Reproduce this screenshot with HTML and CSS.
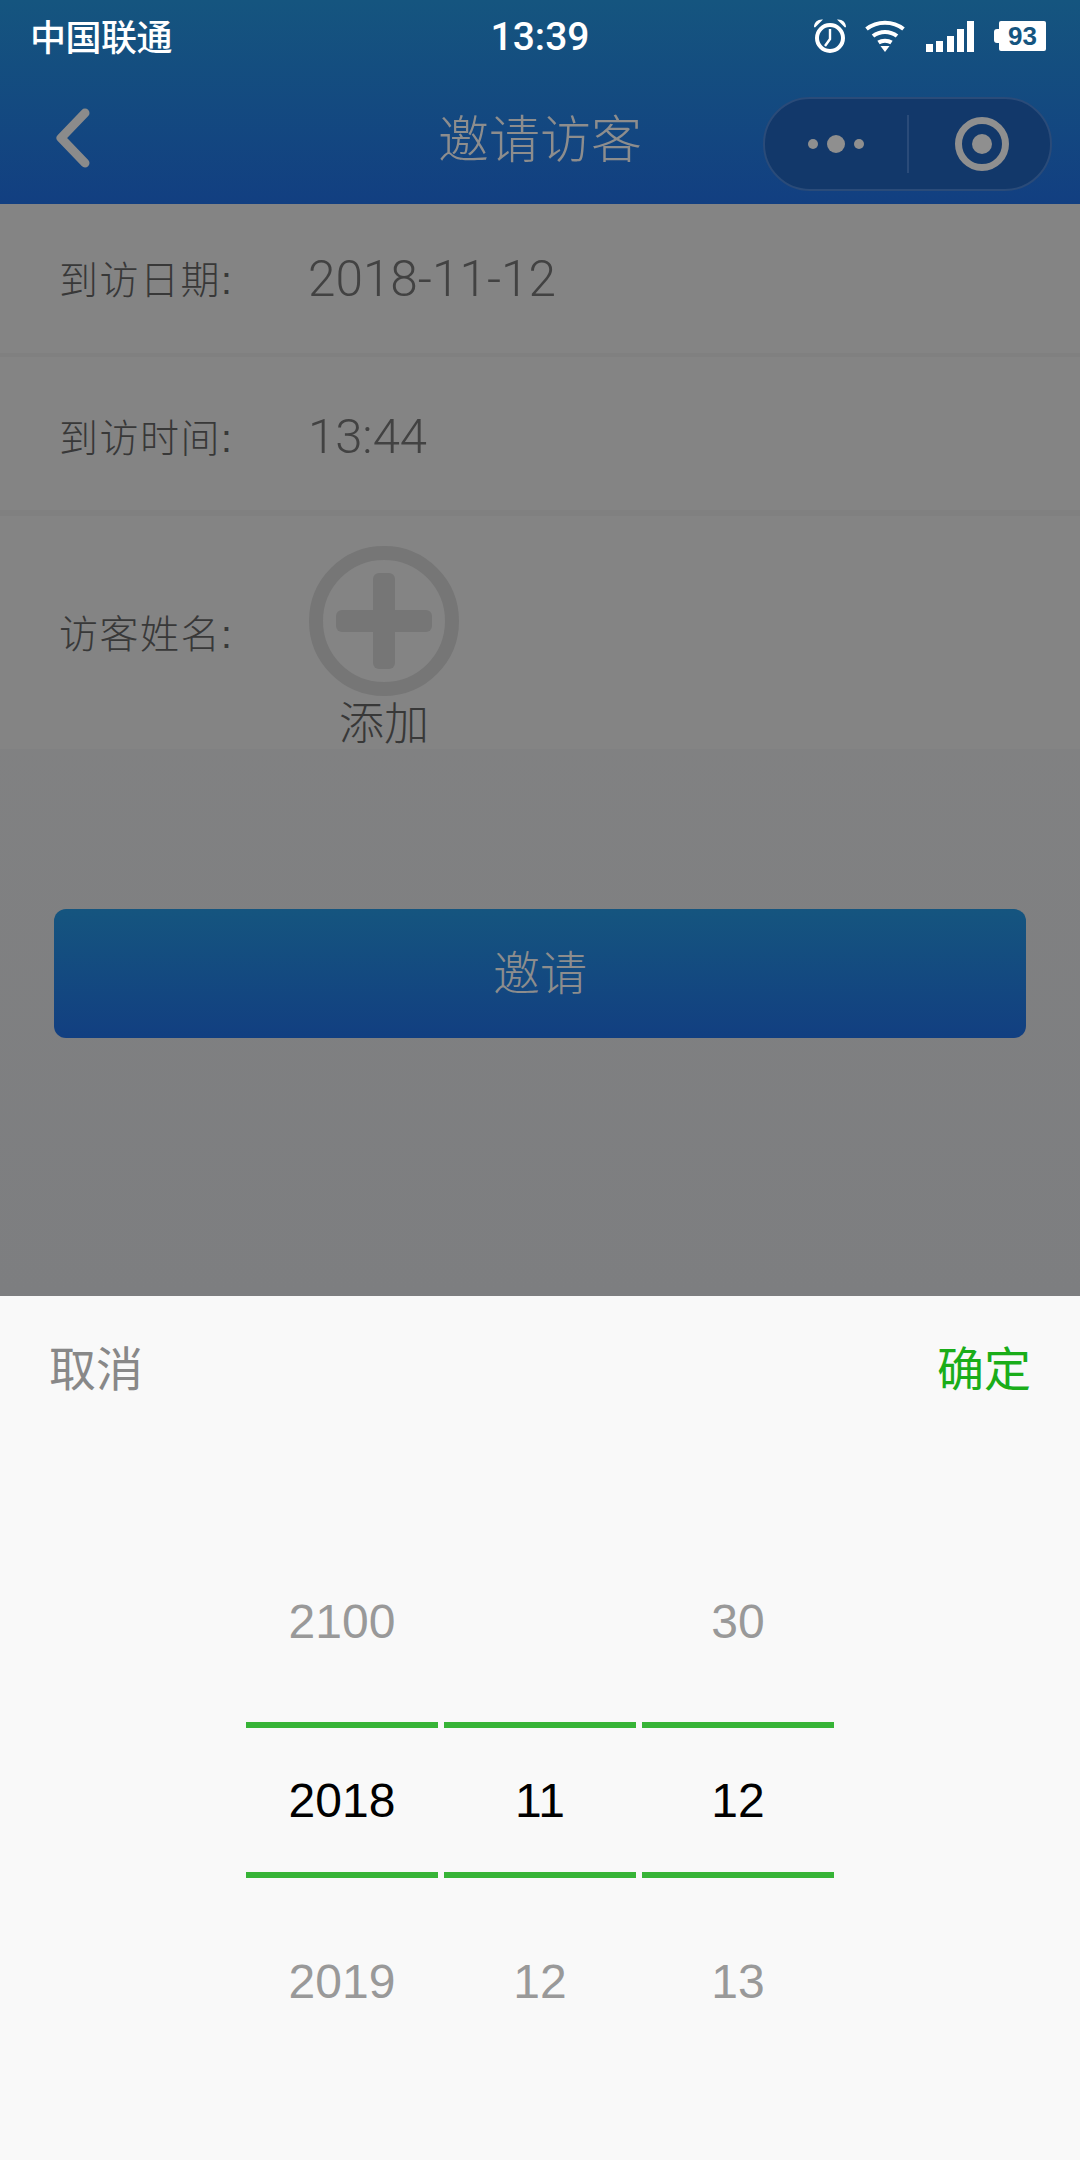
FILE: index.html
```html
<!DOCTYPE html>
<html lang="zh-CN">
<head>
    <meta charset="UTF-8">
    <meta name="viewport" content="width=device-width, initial-scale=1.0">
    <title>邀请访客</title>
    <link rel="stylesheet" href="styles.css">
</head>
<body>
    <div class="app">
        <header class="top">
            <div class="status-bar">
                <span class="carrier">中国联通</span>
                <span class="clock">13:39</span>
                <div class="status-icons">
                    <svg class="icon-alarm" width="34" height="34" viewBox="0 0 34 34">
                        <circle cx="17" cy="19" r="13" fill="none" stroke="#fff" stroke-width="4"/>
                        <path d="M17 10v10l-5 7" fill="none" stroke="#fff" stroke-width="2.4"/>
                        <path d="M1 8C1 3 5 0 10 0.500L2 8.500ZM33 8C33 3 29 0 24 0.500L32 8.500Z" fill="#fff"/>
                    </svg>
                    <svg class="icon-wifi" width="40" height="32" viewBox="0 0 40 32">
                        <path d="M1.500 9C12 0.500 28 0.500 38.500 9M8 16C15 10.500 25 10.500 32 16M13.500 22.500C17 20 23 20 26.500 22.500" fill="none" stroke="#fff" stroke-width="4"/>
                        <path d="M15.500 26H24.500L20 32Z" fill="#fff"/>
                    </svg>
                    <div class="signal">
                        <i class="bar-1"></i><i class="bar-2"></i><i class="bar-3"></i><i class="bar-4"></i><i class="bar-5"></i>
                    </div>
                    <div class="battery"><span>93</span></div>
                </div>
            </div>
            <nav class="nav-bar">
                <svg class="back" width="40" height="64" viewBox="0 0 40 64">
                    <path d="M30 7L6 32L30 57" fill="none" stroke="#8b8b8b" stroke-width="9" stroke-linecap="round" stroke-linejoin="round"/>
                </svg>
                <h1 class="title">邀请访客</h1>
                <div class="capsule">
                    <div class="capsule-more"><i class="dot"></i><i class="dot dot-big"></i><i class="dot"></i></div>
                    <div class="capsule-close"><i class="ring"></i></div>
                </div>
            </nav>
        </header>

        <main class="page">
            <div class="form">
                <div class="row row-date">
                    <span class="label">到访日期:</span>
                    <span class="value">2018-11-12</span>
                </div>
                <div class="row row-time">
                    <span class="label">到访时间:</span>
                    <span class="value">13:44</span>
                </div>
                <div class="row row-name">
                    <span class="label">访客姓名:</span>
                    <div class="add">
                        <div class="add-circle"></div>
                        <span class="add-text">添加</span>
                    </div>
                </div>
            </div>
            <button class="invite">邀请</button>
        </main>

        <section class="picker">
            <div class="picker-head">
                <span class="cancel">取消</span>
                <span class="confirm">确定</span>
            </div>
            <div class="picker-body">
                <div class="column">
                    <div class="item">2100</div>
                    <div class="item selected">2018</div>
                    <div class="item">2019</div>
                </div>
                <div class="column">
                    <div class="item"></div>
                    <div class="item selected">11</div>
                    <div class="item">12</div>
                </div>
                <div class="column">
                    <div class="item">30</div>
                    <div class="item selected">12</div>
                    <div class="item">13</div>
                </div>
            </div>
        </section>
    </div>
</body>
</html>
```

FILE: styles.css
```css
* {
    margin: 0;
    padding: 0;
    box-sizing: border-box;
}

body {
    width: 1080px;
    height: 2160px;
    overflow: hidden;
    background-color: #f9f9f9;
    font-family: "Liberation Sans", "Noto Sans CJK SC", sans-serif;
}

.app {
    display: flex;
    flex-direction: column;
    height: 2160px;
}

/* header */
.top {
    height: 204px;
    background: linear-gradient(180deg, #15557f, #123f81);
}

.status-bar {
    display: grid;
    grid-template-columns: 1fr auto 1fr;
    align-items: center;
    height: 72px;
    padding: 0 34px;
    color: #fff;
}

.carrier {
    margin: -2px 0 0 -4px;
    font-size: 36px;
    font-weight: 500;
    letter-spacing: -0.5px;
}

.clock {
    padding-top: 2px;
    font-family: Roboto, "Liberation Sans", sans-serif;
    font-size: 39px;
    font-weight: 500;
}

.status-icons {
    display: flex;
    align-items: center;
    justify-content: flex-end;
}

.icon-alarm {
    margin-right: 18px;
}

.icon-wifi {
    margin-right: 21px;
}

.signal {
    display: flex;
    align-items: flex-end;
    gap: 3.25px;
    height: 32px;
    margin-right: 25px;
}

.signal i {
    display: block;
    width: 7px;
    background-color: #fff;
}

.signal .bar-1 {
    height: 8px;
}

.signal .bar-2 {
    height: 11px;
}

.signal .bar-3 {
    height: 16px;
}

.signal .bar-4 {
    height: 23px;
}

.signal .bar-5 {
    height: 31px;
}

.battery {
    position: relative;
    display: flex;
    align-items: center;
    justify-content: center;
    width: 47px;
    height: 30px;
    border-radius: 2px;
    background-color: #fff;
}

.battery::before {
    content: "";
    position: absolute;
    left: -5px;
    top: 8px;
    width: 5px;
    height: 14px;
    border-radius: 3px 0 0 3px;
    background-color: #fff;
}

.battery span {
    color: #15557f;
    font-size: 26px;
    font-weight: 700;
}

.nav-bar {
    display: grid;
    grid-template-columns: 1fr auto 1fr;
    align-items: center;
    height: 132px;
    padding: 0 28px;
}

.back {
    margin-left: 27px;
}

.title {
    padding-bottom: 5px;
    color: #8d8d8d;
    font-size: 51px;
    font-weight: 300;
    font-family: "Noto Sans CJK SC", sans-serif;
}

.capsule {
    justify-self: end;
    display: flex;
    align-items: center;
    width: 289px;
    height: 94px;
    margin-top: 12px;
    border: 2px solid #2a4b79;
    border-radius: 47px;
    background-color: #12386a;
}

.capsule-more {
    display: flex;
    align-items: center;
    justify-content: center;
    gap: 9px;
    width: 144px;
    height: 58px;
    border-right: 2px solid #2a4b79;
}

.dot {
    display: block;
    width: 10px;
    height: 10px;
    border-radius: 50%;
    background-color: #8f8f8f;
}

.dot-big {
    width: 18px;
    height: 18px;
}

.capsule-close {
    display: flex;
    flex: 1;
    justify-content: center;
    padding-left: 5px;
}

.ring {
    display: flex;
    align-items: center;
    justify-content: center;
    width: 54px;
    height: 54px;
    border: 7px solid #8f8f8f;
    border-radius: 50%;
}

.ring::after {
    content: "";
    width: 20px;
    height: 20px;
    border-radius: 50%;
    background-color: #8f8f8f;
}

/* form behind the mask */
.page {
    height: 1092px;
    background: linear-gradient(180deg, #848484, #7d7e80);
}

.form {
    background-color: #848484;
}

.row {
    display: flex;
    align-items: center;
    padding-left: 59px;
    border-bottom: 4px solid #808080;
}

.row-date {
    height: 153px;
}

.row-time {
    height: 159px;
    padding-top: 5px;
    border-bottom-width: 6px;
}

.row-name {
    height: 233px;
    border-bottom: none;
}

.label {
    width: 250px;
    padding-bottom: 3px;
    color: #383838;
    font-size: 39px;
    letter-spacing: 1.5px;
    font-weight: 300;
}

.value {
    margin-left: -1px;
    color: #424242;
    font-family: Roboto, "Liberation Sans", sans-serif;
    font-size: 49.5px;
    font-weight: 300;
}

.row-time .value {
    font-size: 49px;
}

.add {
    display: flex;
    flex-direction: column;
    align-items: center;
    align-self: flex-start;
    width: 150px;
    padding-top: 30px;
}

.add-circle {
    position: relative;
    width: 150px;
    height: 150px;
    border: 14px solid #767676;
    border-radius: 50%;
}

.add-circle::before,
.add-circle::after {
    content: "";
    position: absolute;
    border-radius: 6px;
    background-color: #767676;
}

.add-circle::before {
    left: 13px;
    top: 50px;
    width: 96px;
    height: 22px;
}

.add-circle::after {
    left: 50px;
    top: 13px;
    width: 22px;
    height: 96px;
}

.add-text {
    padding-top: 4px;
    color: #383838;
    font-size: 45px;
    font-weight: 300;
    line-height: 50px;
}

.invite {
    display: block;
    width: 972px;
    height: 129px;
    margin: 160px auto 0;
    padding-bottom: 8px;
    border: none;
    border-radius: 12px;
    background: linear-gradient(180deg, #15557f, #123f81);
    color: #8d8d8d;
    font-family: "Noto Sans CJK SC", sans-serif;
    font-size: 47px;
    font-weight: 300;
}

/* date picker */
.picker {
    flex: 1;
    background-color: #f9f9f9;
}

.picker-head {
    display: flex;
    align-items: center;
    justify-content: space-between;
    height: 138px;
    margin-bottom: 84px;
    padding: 0 49px;
    font-size: 47px;
}

.cancel {
    color: #888;
}

.confirm {
    color: #1aad19;
}

.picker-body {
    display: flex;
    justify-content: center;
    gap: 6px;
}

.column {
    width: 192px;
}

.item {
    display: flex;
    align-items: center;
    justify-content: center;
    height: 204px;
    padding-top: 2px;
    color: #999;
    font-size: 48px;
}

.item.selected {
    height: 156px;
    padding-top: 0;
    border-top: 6px solid #37b437;
    border-bottom: 6px solid #37b437;
    color: #000;
}
```
